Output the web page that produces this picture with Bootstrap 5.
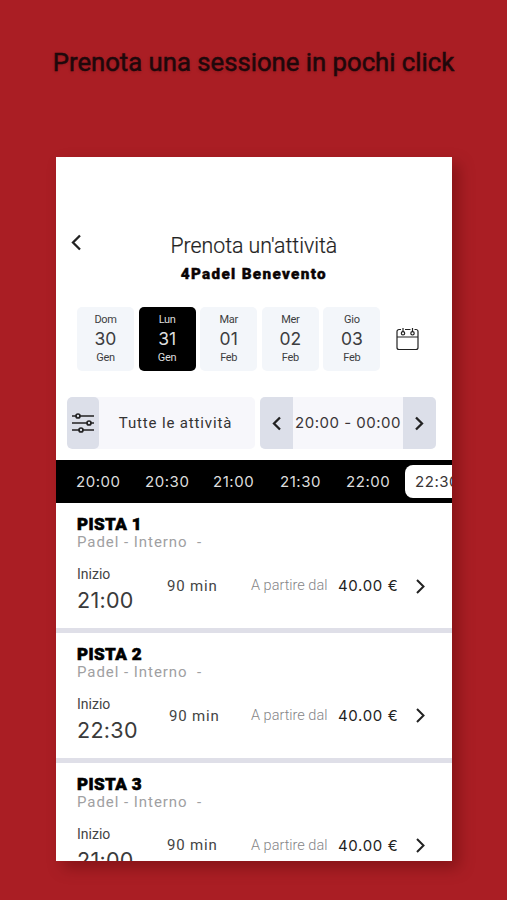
<!DOCTYPE html>
<html lang="it">
<head>
<meta charset="utf-8">
<meta name="viewport" content="width=device-width, initial-scale=1">
<title>Prenota un'attività</title>
<link href="https://cdn.jsdelivr.net/npm/bootstrap@5.3.0/dist/css/bootstrap.min.css" rel="stylesheet">
<style>
body{background:#aa1e24;font-family:Roboto,"Liberation Sans",sans-serif;color:#333;height:900px;overflow:hidden}
.promo{font-size:25.7px;line-height:30px;font-weight:400;color:#1f080b;padding-top:47px;height:157px;-webkit-text-stroke:.5px #1f080b;text-shadow:0 1px 3px rgba(50,0,0,.25);white-space:nowrap}
.phone{width:396px;height:704px;margin-left:56px;box-shadow:7px 7px 14px rgba(70,0,0,.35)}
.top-bar{height:150px;padding:77px 0 0 15px}
.back{width:10px;height:17px}
.heading{font-size:21.3px;line-height:24px;font-weight:300;color:#222;-webkit-text-stroke:.2px #222}
.heading,.club{position:relative;left:-.7px}
.club{font-size:15.3px;line-height:18px;font-weight:900;color:#0b0505;letter-spacing:1.3px;margin-top:7px;-webkit-text-stroke:.4px #0b0505}
.days{gap:4.6px;padding-left:21px;height:64px}
.day{width:57px;height:64px;border-radius:5px;background:#f3f6fa;color:#3c3d40;padding-top:6px}
.day.on{background:#000;color:#ddd}
.day span{font-size:11px;line-height:13px;letter-spacing:-.3px}
.day b{font:400 17.5px/25px Inter,sans-serif}
.cal{margin:20px 0 0 11px}
.filters{margin-top:26px;padding-left:11px;gap:5px;height:52px}
.box{background:#f7f7fb;border-radius:5px;overflow:hidden;height:52px}
.box.kinds{width:188px}
.box.span-time{width:176px}
.box .side{background:#dcdfe9;width:32px;height:52px;border-radius:5px}
.box .arrow{width:33px;border-radius:0}
.act{font-size:15px;letter-spacing:.85px;color:#333;padding-right:3px}
.range{font:400 15px/20px Inter,sans-serif;letter-spacing:.5px;color:#3a3537;white-space:nowrap}
.hours{margin-top:11px;height:43px;background:#000;color:#ddd;font:400 15px/43px Inter,sans-serif;letter-spacing:.55px;padding-left:20px;overflow:hidden}
.hours span{flex:none}
.slot{background:#fff;color:#3a3535;height:33px;line-height:33px;border-radius:8px;width:80px;padding-left:10px}
.court{height:129.8px;flex:none;padding:12px 0 0 21px;border-bottom:5px solid #dfdfe8}
.court h2{font-size:17px;line-height:18px;font-weight:900;color:#000;margin:0;letter-spacing:.4px;-webkit-text-stroke:.6px #000}
.kind{font-size:15px;line-height:18px;letter-spacing:.95px;color:#a0a0a2;white-space:pre}
.start{width:90px;padding-top:13px}
.start small{font-size:14px;line-height:20px;color:#444}
.start div{font:400 21.5px/32px Inter,sans-serif;letter-spacing:.3px;color:#3a3a3a}
.dur{font-size:15px;letter-spacing:.8px;width:84px;color:#444}
.dur.late{padding-left:2px}
.from{font-size:14.5px;color:#858587;width:87px;font-weight:300}
.price{font:400 15px/20px Inter,sans-serif;color:#222;width:78px;letter-spacing:.65px}
.info{padding-top:5px;white-space:nowrap}
svg{display:block;fill:none;stroke:#222}
</style>
</head>
<body>
<h1 class="promo text-center m-0">Prenota una sessione in pochi click</h1>
<main class="phone bg-white overflow-hidden d-flex flex-column">
<header class="top-bar d-flex flex-shrink-0">
<svg class="back" viewBox="0 0 10 17" stroke-width="2.3"><path d="M9 1.500 2 8.500 9 15.500"/></svg>
<div class="flex-grow-1 text-center pe-4"><div class="heading">Prenota un'attività</div><div class="club">4Padel Benevento</div></div>
</header>
<section class="days d-flex flex-shrink-0">
<div class="day d-flex flex-column align-items-center"><span>Dom</span><b>30</b><span>Gen</span></div>
<div class="day on d-flex flex-column align-items-center"><span>Lun</span><b>31</b><span>Gen</span></div>
<div class="day d-flex flex-column align-items-center"><span>Mar</span><b>01</b><span>Feb</span></div>
<div class="day d-flex flex-column align-items-center"><span>Mer</span><b>02</b><span>Feb</span></div>
<div class="day d-flex flex-column align-items-center"><span>Gio</span><b>03</b><span>Feb</span></div>
<svg class="cal" width="23" height="24" viewBox="0 0 23 24" stroke-width="1.2"><path d="M5 2.500H3a2 2 0 0 0-2 2v16a2 2 0 0 0 2 2h17a2 2 0 0 0 2-2v-16a2 2 0 0 0-2-2h-1.500M9 2.500h5.500M1 10h21M7 1v4M16.500 1v4"/><circle cx="7" cy="6.300" r="1.700"/><circle cx="16.500" cy="6.300" r="1.700"/></svg>
</section>
<section class="filters d-flex flex-shrink-0">
<div class="box kinds d-flex align-items-center"><div class="side d-flex align-items-center justify-content-center"><svg width="22" height="20" viewBox="0 0 22 20" stroke-width="1.700"><path d="M0 3h4M8 3h14M0 10h15M19 10h3M0 17h7M11 17h11"/><circle cx="6" cy="3" r="2"/><circle cx="17" cy="10" r="2"/><circle cx="9" cy="17" r="2"/></svg></div><div class="act flex-grow-1 text-center">Tutte le attività</div></div>
<div class="box span-time d-flex align-items-center"><div class="side arrow d-flex align-items-center justify-content-center"><svg width="9" height="15" viewBox="0 0 9 15" stroke-width="2.300"><path d="M8 1.500 2 7.500 8 13.500"/></svg></div><div class="range flex-grow-1 text-center">20:00 - 00:00</div><div class="side arrow d-flex align-items-center justify-content-center"><svg width="9" height="15" viewBox="0 0 9 15" stroke-width="2.300"><path d="M1 1.500 7 7.500 1 13.500"/></svg></div></div>
</section>
<nav class="hours d-flex align-items-center flex-shrink-0"><span style="width:69px">20:00</span><span style="width:68px">20:30</span><span style="width:67px">21:00</span><span style="width:66px">21:30</span><span style="width:59px">22:00</span><span class="slot">22:30</span></nav>
<article class="court"><h2>PISTA 1</h2><div class="kind">Padel - Interno  -</div><div class="d-flex"><div class="start"><small class="d-block">Inizio</small><div>21:00</div></div><div class="info d-flex align-items-center"><span class="dur">90 min</span><span class="from">A partire dal</span><span class="price">40.00 €</span><svg width="9" height="15" viewBox="0 0 9 15" stroke-width="2"><path d="M1 1 7.500 7.500 1 14"/></svg></div></div></article>
<article class="court"><h2>PISTA 2</h2><div class="kind">Padel - Interno  -</div><div class="d-flex"><div class="start"><small class="d-block">Inizio</small><div>22:30</div></div><div class="info d-flex align-items-center"><span class="dur late">90 min</span><span class="from">A partire dal</span><span class="price">40.00 €</span><svg width="9" height="15" viewBox="0 0 9 15" stroke-width="2"><path d="M1 1 7.500 7.500 1 14"/></svg></div></div></article>
<article class="court"><h2>PISTA 3</h2><div class="kind">Padel - Interno  -</div><div class="d-flex"><div class="start"><small class="d-block">Inizio</small><div>21:00</div></div><div class="info d-flex align-items-center"><span class="dur">90 min</span><span class="from">A partire dal</span><span class="price">40.00 €</span><svg width="9" height="15" viewBox="0 0 9 15" stroke-width="2"><path d="M1 1 7.500 7.500 1 14"/></svg></div></div></article>
</main>
<script src="https://cdn.jsdelivr.net/npm/bootstrap@5.3.0/dist/js/bootstrap.bundle.min.js"></script>
</body>
</html>
